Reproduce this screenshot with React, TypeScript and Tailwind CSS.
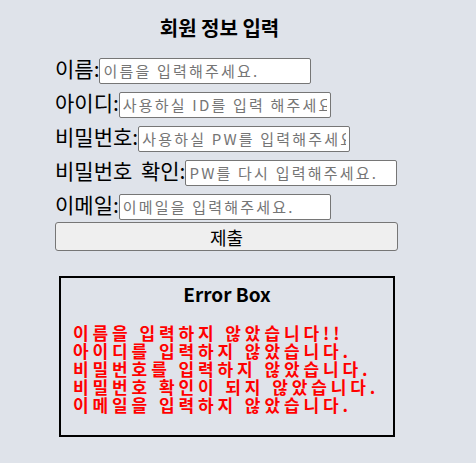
import React from "react";

const rows: { label: string; placeholder: string }[] = [
  { label: "이름:", placeholder: "이름을 입력해주세요." },
  { label: "아이디:", placeholder: "사용하실 ID를 입력 해주세요." },
  { label: "비밀번호:", placeholder: "사용하실 PW를 입력해주세요." },
  { label: "비밀번호 확인:", placeholder: "PW를 다시 입력해주세요." },
  { label: "이메일:", placeholder: "이메일을 입력해주세요." },
];

const errors = [
  "이름을 입력하지 않았습니다!!",
  "아이디를 입력하지 않았습니다.",
  "비밀번호를 입력하지 않았습니다.",
  "비밀번호 확인이 되지 않았습니다.",
  "이메일을 입력하지 않았습니다.",
];

export default function App() {
  return (
    <div
      className="min-h-screen bg-[#dfe3ea] pl-[55px] pt-4 text-black"
      style={{ fontFamily: '"Noto Sans CJK KR", "Noto Sans", sans-serif' }}
    >
      <div className="w-[329px] text-center text-[20px] font-bold leading-[24px]">
        회원 정보 입력
      </div>
      <div className="mt-[15px] flex w-[343px] flex-col gap-2">
        {rows.map((r) => (
          <div key={r.label} className="flex h-[26px] items-baseline">
            <span className="whitespace-pre text-[21px] leading-[26px] [word-spacing:4px]">
              {r.label}
            </span>
            <input
              type="text"
              placeholder={r.placeholder}
              className="h-[26px] w-[212px] shrink-0 rounded-[2px] border border-[#767676] bg-white px-[3px] text-[15px] tracking-[2.2px] text-black outline-none placeholder:text-[#757575]"
            />
          </div>
        ))}
      </div>
      <button
        type="button"
        className="mt-[5px] h-[29px] w-[343px] rounded-[3px] border border-[#767676] bg-[#efefef] text-[18px] leading-none text-black"
      >
        제출
      </button>
      <div className="ml-[4px] mt-[25px] w-[336px] border-2 border-black pb-[21px] pt-[4px]">
        <div className="text-center text-[19px] font-bold leading-[24px]">Error Box</div>
        <div className="mt-[18px] pl-[12px] text-[17px] font-bold leading-[18px] tracking-[3.9px] text-[#ff0000]">
          {errors.map((e) => (
            <div key={e} className="whitespace-nowrap">
              {e}
            </div>
          ))}
        </div>
      </div>
    </div>
  );
}
